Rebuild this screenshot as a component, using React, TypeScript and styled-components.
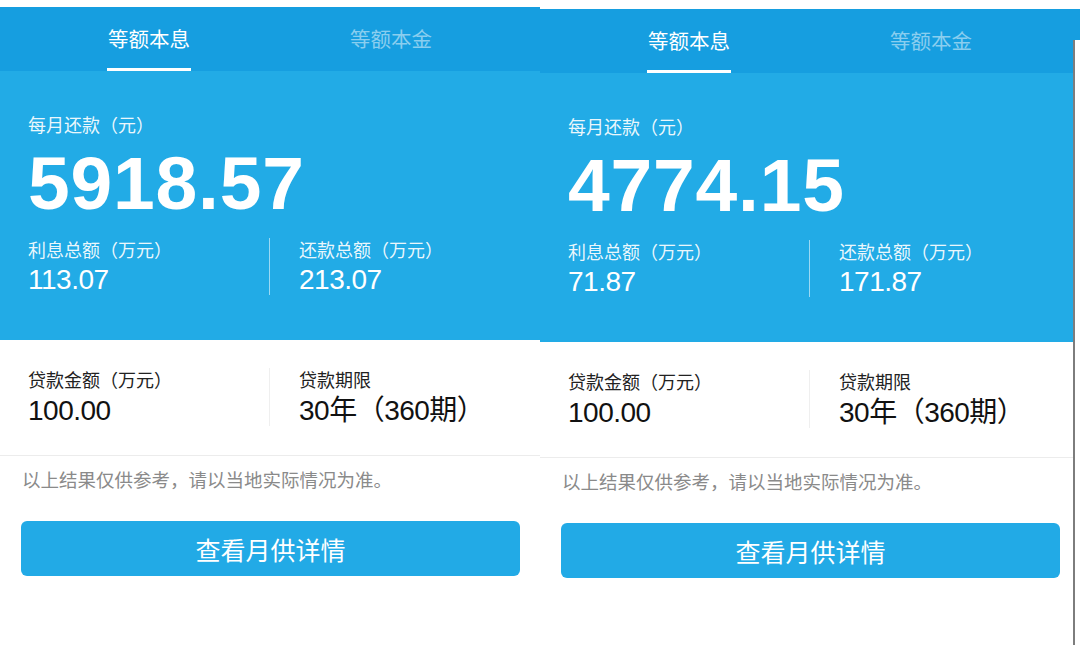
import styled, { createGlobalStyle } from 'styled-components';

const GlobalStyle = createGlobalStyle`
  html, body {
    margin: 0;
    padding: 0;
    background: #ffffff;
  }
  body {
    font-family: "Liberation Sans", "Noto Sans CJK SC", sans-serif;
    -webkit-font-smoothing: antialiased;
  }
`;

const Page = styled.div`
  display: flex;
  width: 1080px;
  height: 645px;
  overflow: hidden;
  background: #ffffff;
`;

const Panel = styled.div<{ offset: number; edge?: boolean }>`
  position: relative;
  width: 540px;
  flex-shrink: 0;
  margin-top: ${p => p.offset}px;
  padding-top: 7px;
  display: flex;
  flex-direction: column;

  ${p =>
    p.edge &&
    `
    &::after {
      content: '';
      position: absolute;
      top: 38px;
      right: 0;
      bottom: 0;
      width: 5px;
      background: #ffffff;
      border-left: 2px solid rgba(70, 70, 70, 0.7);
    }
  `}
`;

const TabBar = styled.div`
  display: flex;
  height: 64px;
  padding: 0 28px;
  background: #169ee0;
  box-sizing: border-box;
`;

const Tab = styled.div`
  flex: 1;
  display: flex;
  justify-content: center;
  padding-top: 18px;
`;

const TabInner = styled.div`
  display: flex;
  flex-direction: column;
`;

const TabLabel = styled.span<{ active?: boolean }>`
  font-family: "Noto Sans CJK SC", sans-serif;
  font-size: 20.5px;
  line-height: 26px;
  color: ${p => (p.active ? '#ffffff' : 'rgba(255, 255, 255, 0.5)')};
`;

const Underline = styled.div<{ active?: boolean }>`
  margin-top: 17px;
  height: 3px;
  margin-left: -1px;
  margin-right: -1px;
  background: ${p => (p.active ? '#ffffff' : 'transparent')};
`;

const Summary = styled.div`
  height: 269px;
  box-sizing: border-box;
  padding: 45px 0 0 28px;
  background: #22abe6;
  color: #ffffff;
`;

const MonthlyLabel = styled.div`
  font-size: 18px;
  line-height: 20px;
  color: rgba(255, 255, 255, 0.92);
`;

const BigNumber = styled.div`
  margin-top: 10px;
  font-size: 75px;
  line-height: 75px;
  font-weight: 700;
  letter-spacing: 0.8px;
  color: #ffffff;
`;

const StatGrid = styled.div<{ top: number }>`
  display: grid;
  grid-template-columns: 242px 1fr;
  margin-top: ${p => p.top}px;
`;

const StatCell = styled.div<{ divider?: string }>`
  padding-top: 3px;
  ${p => (p.divider ? `border-right: 1px solid ${p.divider};` : 'padding-left: 29px;')}
`;

const StatLabel = styled.div<{ dark?: boolean }>`
  font-size: 18px;
  line-height: 20px;
  color: ${p => (p.dark ? '#222222' : 'rgba(255, 255, 255, 0.92)')};
`;

const StatValue = styled.div<{ dark?: boolean; gap: number }>`
  margin-top: ${p => p.gap}px;
  font-size: 28px;
  line-height: 30px;
  letter-spacing: -0.5px;
  color: ${p => (p.dark ? '#111111' : '#ffffff')};
`;

const Details = styled.div`
  box-sizing: border-box;
  height: 116px;
  padding: 28px 0 0 28px;
  border-bottom: 1px solid #ececec;
`;

const Disclaimer = styled.div`
  margin: 14px 0 0 22px;
  font-size: 18.5px;
  line-height: 22px;
  color: #8a8a8a;
`;

const DetailButton = styled.button`
  margin: 29px 20px 0 21px;
  height: 55px;
  border: none;
  border-radius: 6px;
  background: #22aae6;
  color: #ffffff;
  font-family: "Noto Sans CJK SC", sans-serif;
  font-size: 25px;
  cursor: pointer;
`;

interface LoanResult {
  monthly: string;
  interest: string;
  total: string;
}

const results: LoanResult[] = [
  { monthly: '5918.57', interest: '113.07', total: '213.07' },
  { monthly: '4774.15', interest: '71.87', total: '171.87' },
];

const ResultPanel = ({ data, offset, edge }: { data: LoanResult; offset: number; edge?: boolean }) => (
  <Panel offset={offset} edge={edge}>
    <TabBar>
      <Tab>
        <TabInner>
          <TabLabel active>等额本息</TabLabel>
          <Underline active />
        </TabInner>
      </Tab>
      <Tab>
        <TabInner>
          <TabLabel>等额本金</TabLabel>
          <Underline />
        </TabInner>
      </Tab>
    </TabBar>
    <Summary>
      <MonthlyLabel>每月还款（元）</MonthlyLabel>
      <BigNumber>{data.monthly}</BigNumber>
      <StatGrid top={17}>
        <StatCell divider="rgba(255, 255, 255, 0.55)">
          <StatLabel>利息总额（万元）</StatLabel>
          <StatValue gap={4}>{data.interest}</StatValue>
        </StatCell>
        <StatCell>
          <StatLabel>还款总额（万元）</StatLabel>
          <StatValue gap={4}>{data.total}</StatValue>
        </StatCell>
      </StatGrid>
    </Summary>
    <Details>
      <StatGrid top={0}>
        <StatCell divider="#efefef">
          <StatLabel dark>贷款金额（万元）</StatLabel>
          <StatValue dark gap={5}>100.00</StatValue>
        </StatCell>
        <StatCell>
          <StatLabel dark>贷款期限</StatLabel>
          <StatValue dark gap={5}>30年（360期）</StatValue>
        </StatCell>
      </StatGrid>
    </Details>
    <Disclaimer>以上结果仅供参考，请以当地实际情况为准。</Disclaimer>
    <DetailButton>查看月供详情</DetailButton>
  </Panel>
);

export default function App() {
  return (
    <>
      <GlobalStyle />
      <Page>
        <ResultPanel data={results[0]} offset={0} />
        <ResultPanel data={results[1]} offset={2} edge />
      </Page>
    </>
  );
}
